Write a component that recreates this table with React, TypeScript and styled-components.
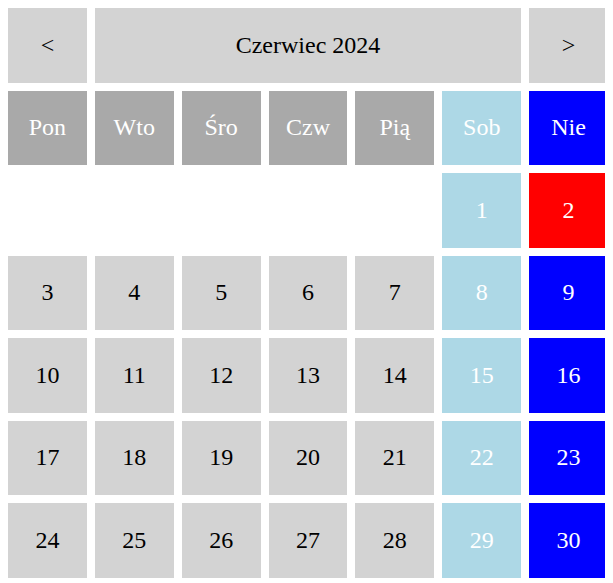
import React from "react";
import styled, { createGlobalStyle } from "styled-components";

const Global = createGlobalStyle`
  html, body { overflow: hidden; }
  body {
    margin: 8px;
    font-family: "Liberation Serif", "Times New Roman", serif;
    background: #ffffff;
  }
`;

const Calendar = styled.div`
  width: 600px;
  display: grid;
  grid-template-columns: repeat(7, 1fr);
  grid-auto-rows: 74.5px;
  gap: 8px;
`;

const Cell = styled.div<{ $bg?: string; $fg?: string; $span?: number }>`
  display: flex;
  align-items: center;
  justify-content: center;
  background: ${(p) => p.$bg ?? "transparent"};
  color: ${(p) => p.$fg ?? "#000000"};
  font-size: 24px;
  grid-column: ${(p) => (p.$span ? `span ${p.$span}` : "auto")};
`;

const NavButton = styled.button`
  display: flex;
  align-items: center;
  justify-content: center;
  border: none;
  padding: 0;
  background: #d3d3d3;
  color: #000000;
  font-family: inherit;
  font-size: 24px;
  cursor: pointer;
`;

const dayNames = ["Pon", "Wto", "Śro", "Czw", "Pią", "Sob", "Nie"];

const colorFor = (col: number, day: number) => {
  if (day === 2) return { bg: "#ff0000", fg: "#ffffff" };
  if (col === 5) return { bg: "#add8e6", fg: "#ffffff" };
  if (col === 6) return { bg: "#0000ff", fg: "#ffffff" };
  return { bg: "#d3d3d3", fg: "#000000" };
};

export default function App() {
  const offset = 5;
  const cells: React.ReactNode[] = [];
  for (let i = 0; i < offset; i++) cells.push(<Cell key={`e${i}`} />);
  for (let d = 1; d <= 30; d++) {
    const col = (offset + d - 1) % 7;
    const c = colorFor(col, d);
    cells.push(
      <Cell key={d} $bg={c.bg} $fg={c.fg}>
        {d}
      </Cell>
    );
  }
  return (
    <>
      <Global />
      <Calendar>
        <NavButton>&lt;</NavButton>
        <Cell $bg="#d3d3d3" $span={5}>
          Czerwiec 2024
        </Cell>
        <NavButton>&gt;</NavButton>
        {dayNames.map((n, i) => (
          <Cell
            key={n}
            $bg={i === 5 ? "#add8e6" : i === 6 ? "#0000ff" : "#a9a9a9"}
            $fg="#ffffff"
          >
            {n}
          </Cell>
        ))}
        {cells}
      </Calendar>
    </>
  );
}
